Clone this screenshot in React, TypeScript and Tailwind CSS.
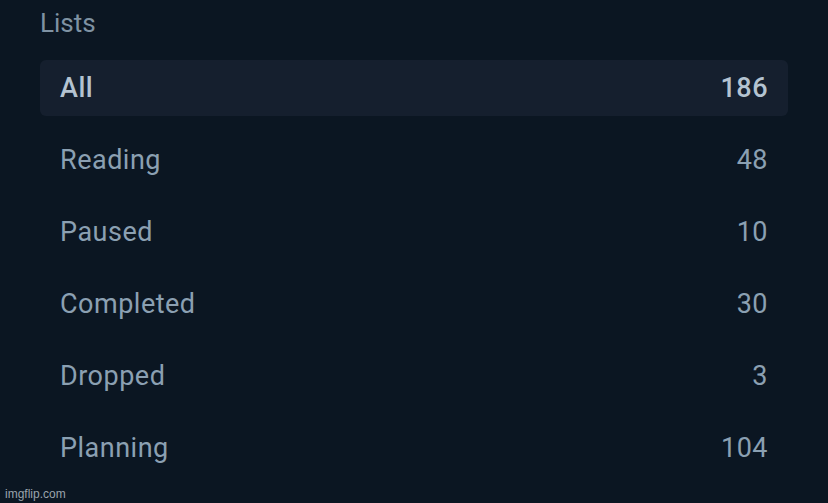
import React from 'react';

const lists = [
  { name: 'All', count: 186, active: true },
  { name: 'Reading', count: 48 },
  { name: 'Paused', count: 10 },
  { name: 'Completed', count: 30 },
  { name: 'Dropped', count: 3 },
  { name: 'Planning', count: 104 },
];

const App = () => {
  return (
    <div
      className="relative w-[828px] h-[503px] bg-[#0b1622] overflow-hidden"
      style={{ fontFamily: 'Roboto, "Liberation Sans", sans-serif' }}
    >
      <div className="px-10 pt-[7px]">
        <h2 className="text-[26px] leading-[32px] text-[#7f92a3] font-normal mb-[21px]">Lists</h2>
        <div className="flex flex-col gap-4">
          {lists.map((l) => (
            <div
              key={l.name}
              className={`flex items-center justify-between h-14 px-5 rounded-md text-[27px] leading-[32px] tracking-[0.5px] ${
                l.active ? 'bg-[#151f2e] text-[#b4c3d1] font-medium' : 'text-[#8ba0b2]'
              }`}
            >
              <span className="-mt-[1px]">{l.name}</span>
              <span className="-mt-[1px]">{l.count}</span>
            </div>
          ))}
        </div>
      </div>
      <div className="absolute left-[5px] bottom-[2px] text-[12px] leading-[14px] text-[#9aa3ac]" style={{ fontFamily: '"Liberation Sans", sans-serif' }}>
        imgflip.com
      </div>
    </div>
  );
};

export default App;
